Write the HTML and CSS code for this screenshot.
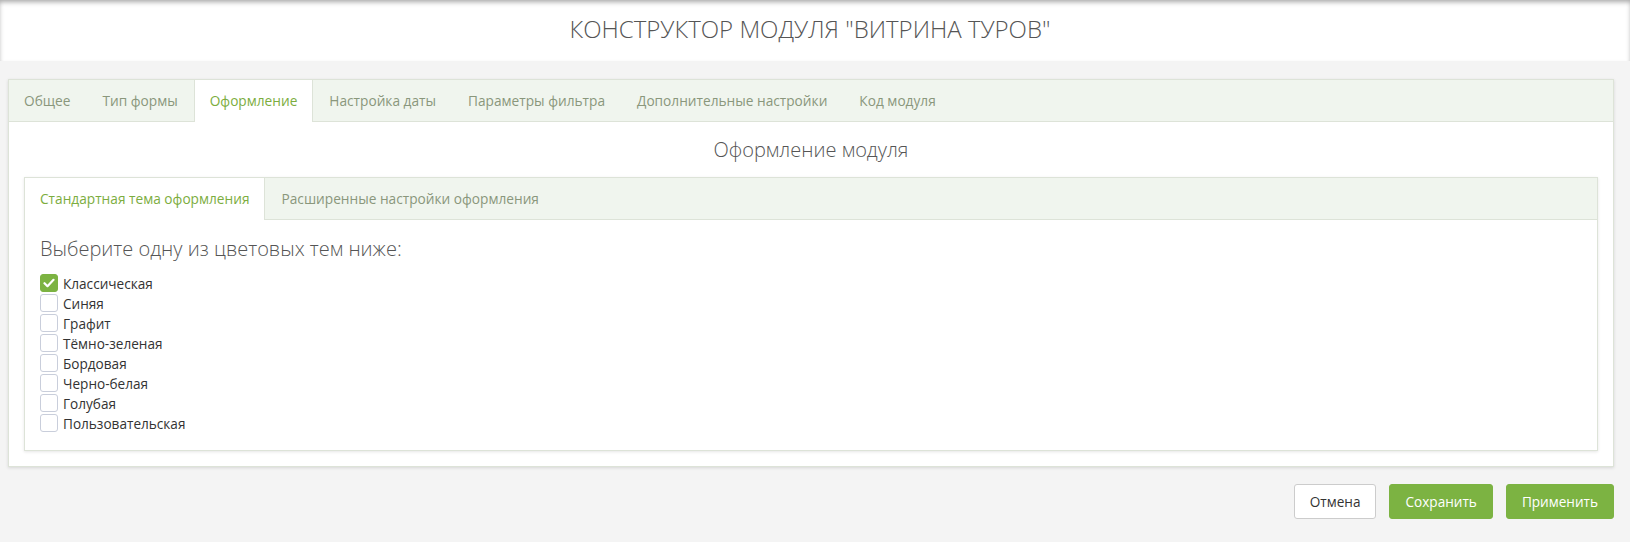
FILE: index.html
```html
<!DOCTYPE HTML>
<html>
<head>
<meta http-equiv="Content-Type" content="text/html; charset=utf-8">
<title>Конструктор модуля</title>
<link rel="stylesheet" href="styles.css">
</head>
<body>
	<div id="header">
		<h1>КОНСТРУКТОР МОДУЛЯ "ВИТРИНА ТУРОВ"</h1>
	</div>
	<div id="wrap">
		<div class="panel">
			<ul class="tabs">
				<li>Общее</li>
				<li>Тип формы</li>
				<li class="active">Оформление</li>
				<li>Настройка даты</li>
				<li>Параметры фильтра</li>
				<li>Дополнительные настройки</li>
				<li>Код модуля</li>
			</ul>
			<div class="panel-body">
				<h2>Оформление модуля</h2>
				<div class="panel inner">
					<ul class="tabs">
						<li class="active">Стандартная тема оформления</li>
						<li>Расширенные настройки оформления</li>
					</ul>
					<div class="inner-body">
						<h3>Выберите одну из цветовых тем ниже:</h3>
						<ul id="themes">
							<li><span class="check checked"><svg width="12" height="10" viewBox="0 0 12 10"><path d="M1.5 5.2l3 3 6-6.4" fill="none" stroke="#fff" stroke-width="2.2" stroke-linecap="round" stroke-linejoin="round"/></svg></span>Классическая</li>
							<li><span class="check"></span>Синяя</li>
							<li><span class="check"></span>Графит</li>
							<li><span class="check"></span>Тёмно-зеленая</li>
							<li><span class="check"></span>Бордовая</li>
							<li><span class="check"></span>Черно-белая</li>
							<li><span class="check"></span>Голубая</li>
							<li><span class="check"></span>Пользовательская</li>
						</ul>
					</div>
				</div>
			</div>
		</div>
		<div id="buttons">
			<div class="btn">Отмена</div>
			<div class="btn green">Сохранить</div>
			<div class="btn green">Применить</div>
		</div>
	</div>
</body>
</html>
```

FILE: styles.css
```css
html body ul{margin: 0;padding: 0;}
body{
	margin: 0;
	background: #f4f4f4;
	font-family: "Open Sans", "Noto Sans", sans-serif;
	color: #333;
}
li{list-style: none;}
#header{
	height: 61px;
	background: #fff;
	box-shadow: inset 0 3px 5px -1px rgba(0,0,0,.35);
}
#header h1{
	margin: 0;
	padding-right: 10px;
	line-height: 58px;
	text-align: center;
	font-size: 24px;
	font-weight: 300;
	color: #555;
}
#wrap{padding: 18px 16px 0 8px;}
.panel{
	background: #fff;
	border: 1px solid #dde3d8;
	box-shadow: 0 1px 3px rgba(0,0,0,.12);
}
.tabs{
	display: flex;
	height: 41px;
	background: #f0f5ee;
	border-bottom: 1px solid #dde3d8;
}
.tabs li{
	padding: 0 15px;
	line-height: 41px;
	height: 42px;
	font-size: 13.7px;
	color: #8a977c;
	border-left: 1px solid transparent;
	border-right: 1px solid transparent;
	box-sizing: border-box;
}
.tabs li:first-child{border-left: none;}
.tabs li.active{
	background: #fff;
	color: #7cad3e;
	border-color: #dde3d8;
}
.panel-body{padding: 0 15px 15px;}
.panel-body h2{
	margin: 0;
	line-height: 55px;
	text-align: center;
	font-size: 20px;
	font-weight: 300;
	color: #555;
}
.inner{box-shadow: 0 1px 3px rgba(0,0,0,.1);}
.inner-body{padding: 15px 15px 17px;}
.inner-body h3{
	margin: 0 0 10px;
	line-height: 28px;
	font-size: 20px;
	font-weight: 300;
	color: #555;
}
#themes li{
	display: flex;
	align-items: center;
	height: 20px;
	font-size: 13.6px;
	color: #333;
}
.check{
	display: flex;
	align-items: center;
	justify-content: center;
	width: 18px;
	height: 18px;
	margin-right: 5px;
	border: 1px solid #c9cedb;
	border-radius: 3px;
	box-sizing: border-box;
	background: #fff;
}
.check.checked{
	background: #7cb342;
	border-color: #7cb342;
}
#buttons{
	display: flex;
	justify-content: flex-end;
	gap: 13px;
	margin-top: 17px;
}
.btn{
	height: 35px;
	line-height: 33px;
	padding: 0 15px;
	font-size: 13.6px;
	color: #333;
	background: #fff;
	border: 1px solid #ccc;
	border-radius: 3px;
	box-sizing: border-box;
}
.btn.green{
	background: #7cb342;
	border-color: #7cb342;
	color: #fff;
	font-weight: 500;
	padding: 0 15px;
}
```
